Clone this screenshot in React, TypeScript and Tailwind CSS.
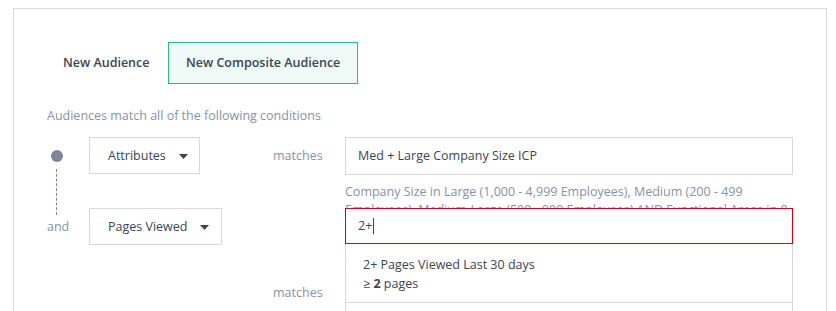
import React from "react";

function Caret() {
  return (
    <svg width="9" height="5" viewBox="0 0 9 5" className="ml-[13px]">
      <path d="M0 0h9L4.5 5z" fill="#3d4552" />
    </svg>
  );
}

export default function App() {
  return (
    <div
      className="w-[836px] h-[311px] overflow-hidden bg-white pt-[8px] pl-[13px] pr-[9px]"
      style={{ fontFamily: '"Open Sans", sans-serif' }}
    >
      <div className="h-[330px] border-l border-t border-r border-[#d9d9d9] pl-[33px] pt-[33px] text-[12.5px] text-[#3d4552]">
        <div className="flex items-center">
          <div className="w-[121px] pl-[16px] font-semibold">New Audience</div>
          <div className="h-[42px] w-[190px] flex items-center pl-[17px] border border-[#2dba78] bg-[#f0faf6] font-semibold">
            New Composite Audience
          </div>
        </div>
        <div className="mt-[23px] text-[#8893a5] leading-[18px]">Audiences match all of the following conditions</div>

        <div className="mt-[12px] grid grid-cols-[42px_184px_72px_448px]">
          {/* Row 1 */}
          <div className="relative h-[37px]">
            <div className="absolute left-[4px] top-[13px] w-[12px] h-[12px] rounded-full bg-[#7d8799]" />
            <div className="absolute left-[9px] top-[32px] h-[46px] border-l border-dashed border-[#7d8799]" />
          </div>
          <div>
            <div className="w-[111px] h-[37px] border border-[#d9d9d9] flex items-center pl-[18px] pt-px">
              Attributes
              <Caret />
            </div>
          </div>
          <div className="h-[38px] flex items-center pt-px text-[#8893a5]">matches</div>
          <div>
            <div className="h-[38px] border border-[#d9d9d9] flex items-center pl-[12px] pt-px">Med + Large Company Size ICP</div>
            <div className="h-[33px] pt-[8px] leading-[18px] text-[#8893a5] overflow-visible">
              Company Size in Large (1,000 - 4,999 Employees), Medium (200 - 499 Employees), Medium-Large (500 - 999 Employees) AND Functional Areas in 8 selected
            </div>
          </div>

          {/* Row 2 */}
          <div className="h-[37px] flex items-center pt-px text-[#8893a5]">and</div>
          <div>
            <div className="w-[133px] h-[37px] border border-[#d9d9d9] flex items-center pl-[18px] pt-px">
              Pages Viewed
              <Caret />
            </div>
          </div>
          <div />
          <div className="relative z-10">
            <div className="h-[36px] border border-[#d0021b] bg-white flex items-center pl-[12px]">
              2+<span className="inline-block w-px h-[16px] bg-[#3d4552] ml-px" />
            </div>
            <div className="absolute left-0 right-0 top-[36px] bg-white border-l border-r border-[#d9d9d9]">
              <div className="border-b border-[#d9d9d9] pl-[17px] pt-[11px] pb-[9px] leading-[19px]">
                <div>2+ Pages Viewed Last 30 days</div>
                <div>
                  ≥ <span className="font-bold">2</span> pages
                </div>
              </div>
              <div className="h-[40px]" />
            </div>
          </div>

          {/* Row 3 */}
          <div className="mt-[30px]" />
          <div className="mt-[30px]" />
          <div className="mt-[30px] h-[37px] flex items-center text-[#8893a5]">matches</div>
          <div className="mt-[30px] h-[38px] border border-[#d9d9d9]" />
        </div>
      </div>
    </div>
  );
}
